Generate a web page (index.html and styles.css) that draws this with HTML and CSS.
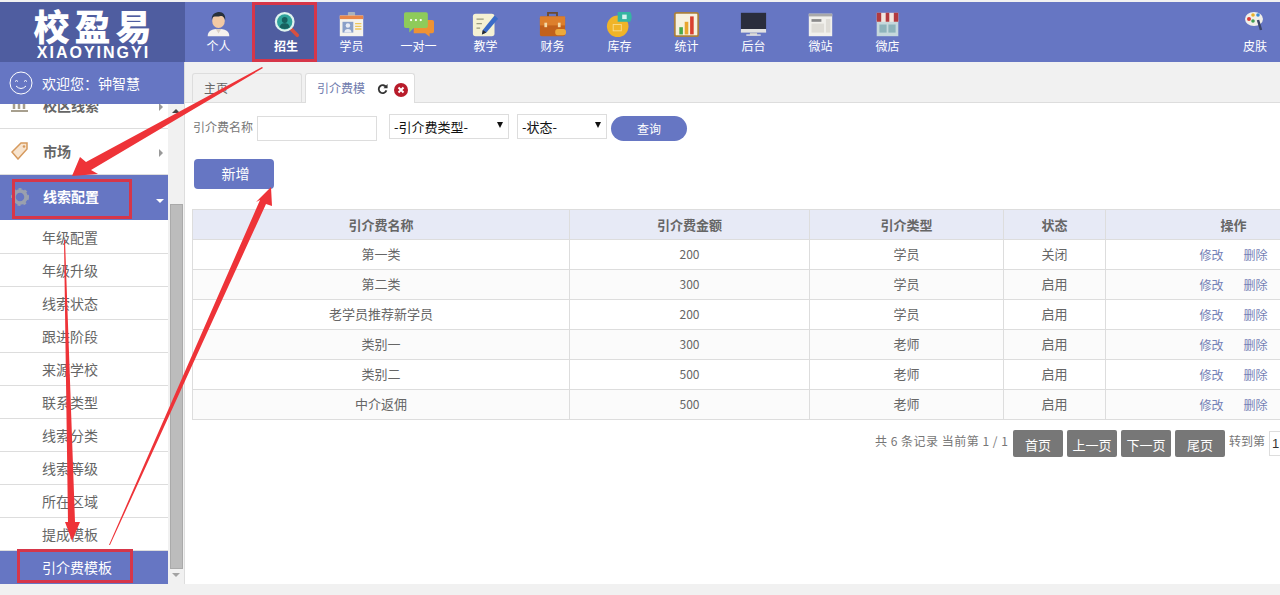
FILE: index.html
```html
<!DOCTYPE html>
<html lang="zh-CN">
<head>
<meta charset="utf-8">
<title>引介费模板</title>
<link rel="stylesheet" href="styles.css">
</head>
<body>
<div class="app">
  <header class="top">
    <div class="logo">
      <div class="logo-cn">校盈易</div>
      <div class="logo-en">XIAOYINGYI</div>
    </div>
    <nav class="nav">
      <a class="nav-item"><svg class="ico" viewBox="0 0 30 30"><path d="M3 28c0-6 5-8 12-8s12 2 12 8z" fill="#f4f1ee"/><path d="M12 20l3 5 3-5z" fill="#d9cfc6"/><ellipse cx="15" cy="11" rx="7" ry="8" fill="#f2c9a4"/><path d="M7.500 10C7 3 12 1 16 1s7 3 6.500 9c-1-3-3-5-5-4.500-3 1-7 0-8 1-1 .6-1.500 2-2 3.500z" fill="#28303a"/></svg><span>个人</span></a>
      <a class="nav-item active"><svg class="ico" viewBox="0 0 30 30"><path d="M19 19l8 8" stroke="#d8503f" stroke-width="4" stroke-linecap="round"/><circle cx="13" cy="12" r="11" fill="#dff3ef"/><circle cx="13" cy="12" r="8.500" fill="#2fa39b"/><circle cx="13" cy="10" r="3.200" fill="#17615f"/><path d="M7.500 18c.5-4 3-4.500 5.500-4.500s5 .5 5.500 4.500c-3 2.500-8 2.500-11 0z" fill="#17615f"/></svg><span>招生</span></a>
      <a class="nav-item"><svg class="ico" viewBox="0 0 30 30"><rect x="11" y="1" width="8" height="6" rx="1" fill="#aab2bd"/><rect x="2" y="5" width="26" height="23" fill="#f5f3ec"/><rect x="2" y="5" width="26" height="4" fill="#e9864a"/><rect x="5" y="12" width="12" height="12" fill="#8aa0c8"/><circle cx="11" cy="16" r="2.500" fill="#e8ecf5"/><path d="M7 24c0-3 2-4 4-4s4 1 4 4z" fill="#e8ecf5"/><path d="M19 14h7M19 17h7M19 20h7" stroke="#eec65a" stroke-width="1.500"/></svg><span>学员</span></a>
      <a class="nav-item"><svg class="ico ico-wide" viewBox="0 0 34 30"><path d="M11 10h21a2 2 0 0 1 2 2v11a2 2 0 0 1-2 2h-3v4l-5-4H11z" fill="#ee9233"/><path d="M2 1h23a2 2 0 0 1 2 2v14a2 2 0 0 1-2 2H11l-5 5v-5H2a2 2 0 0 1-2-2V3a2 2 0 0 1 2-2z" fill="#8ecb5a"/><circle cx="8" cy="10" r="1.300" fill="#fff"/><circle cx="13.500" cy="10" r="1.300" fill="#fff"/><circle cx="19" cy="10" r="1.300" fill="#fff"/></svg><span>一对一</span></a>
      <a class="nav-item"><svg class="ico" viewBox="0 0 30 30"><rect x="1" y="3" width="24" height="25" rx="3" fill="#f5f1d3"/><path d="M5 9h8M5 14h6M5 19h4" stroke="#9a9a7e" stroke-width="1.500"/><path d="M12 21L25 5l4 3.500L16 24l-5 2z" fill="#3a6bc8"/><path d="M11 26l1-5 4 3z" fill="#2b2b2b"/></svg><span>教学</span></a>
      <a class="nav-item"><svg class="ico" viewBox="0 0 30 30"><path d="M10 6V2h10v4" fill="none" stroke="#6b4a30" stroke-width="2"/><rect x="1" y="6" width="28" height="22" rx="2" fill="#c2611c"/><rect x="1" y="6" width="28" height="10" fill="#dd7f2c"/><rect x="6" y="13" width="3" height="5" fill="#f4d9a6"/><rect x="21" y="13" width="3" height="5" fill="#f4d9a6"/><rect x="18" y="20" width="12" height="7" rx="3" fill="#eda93c"/></svg><span>财务</span></a>
      <a class="nav-item"><svg class="ico" viewBox="0 0 30 30"><circle cx="13" cy="17" r="12" fill="#f0b428"/><path d="M13 12V1h14a11 11 0 0 1 0 11z" fill="#35b5a2"/><rect x="8" y="15" width="9" height="7" fill="none" stroke="#f8dc8e" stroke-width="1"/><rect x="18" y="4" width="5" height="5" fill="#d8f3ee"/></svg><span>库存</span></a>
      <a class="nav-item"><svg class="ico" viewBox="0 0 30 30"><rect x="2" y="2" width="26" height="26" rx="2" fill="#f7f1df" stroke="#a87f3f" stroke-width="2"/><rect x="7" y="18" width="4" height="8" fill="#4aa84a"/><rect x="13" y="12" width="4" height="14" fill="#e8a52e"/><rect x="19" y="6" width="4" height="20" fill="#d9402f"/></svg><span>统计</span></a>
      <a class="nav-item"><svg class="ico" viewBox="0 0 30 30"><rect x="1" y="2" width="28" height="20" fill="#2a2d3c"/><rect x="1" y="20" width="28" height="4" fill="#e3e3e3"/><rect x="11" y="24" width="8" height="3" fill="#c9c9c9"/><rect x="7" y="26" width="16" height="1.500" fill="#e8e8e8"/></svg><span>后台</span></a>
      <a class="nav-item"><svg class="ico" viewBox="0 0 30 30"><rect x="2" y="3" width="26" height="25" fill="#f1f0ec"/><rect x="2" y="3" width="26" height="3" fill="#a9a9a9"/><rect x="5" y="9" width="11" height="3" fill="#8a8a8a"/><rect x="5" y="14" width="14" height="10" fill="#dedcd6"/><rect x="21" y="9" width="5" height="15" fill="#dedcd6"/></svg><span>微站</span></a>
      <a class="nav-item"><svg class="ico" viewBox="0 0 30 30"><rect x="3" y="10" width="24" height="18" fill="#c6d8dc"/><rect x="6" y="15" width="8" height="9" fill="#8eb3bb"/><rect x="16" y="15" width="8" height="9" fill="#8eb3bb"/><path d="M3 2h24v10H3z" fill="#f1e6df"/><path d="M3 2h5v10H3zM13 2h4v10h-4zM22 2h5v10h-5z" fill="#b23a3f"/></svg><span>微店</span></a>
      <a class="nav-item skin"><svg class="ico ico-small" viewBox="0 0 20 20"><ellipse cx="9" cy="8" rx="9" ry="7" fill="#f1efe8"/><circle cx="4" cy="8" r="2" fill="#dd3b36"/><circle cx="8" cy="4" r="1.800" fill="#e8b22c"/><circle cx="13" cy="4" r="1.800" fill="#3a8bd6"/><circle cx="8" cy="10" r="1.800" fill="#3e9e52"/><path d="M13 9l3 10" stroke="#3b4568" stroke-width="2.500"/></svg><span>皮肤</span></a>
    </nav>
  </header>

  <aside class="side">
    <div class="welcome">
      <svg class="smile" viewBox="0 0 24 24"><circle cx="12" cy="12" r="11" fill="none" stroke="#fff" stroke-width="1"/><path d="M6 10.500q1.500-2 3 0M15 10.500q1.500-2 3 0M7 15q5 5 10 0" fill="none" stroke="#fff" stroke-width="1"/></svg>
      <span>欢迎您：钟智慧</span>
    </div>
    <div class="side-body">
      <ul class="menu">
        <li class="group clipped"><svg class="group-ico" viewBox="0 0 18 14"><path d="M3 1v9M8 1v9M13 1v9" stroke="#a79f8e" stroke-width="2.500"/><path d="M0 12h17" stroke="#a79f8e" stroke-width="2"/></svg><span>校区线索</span><i class="arrow-r"></i></li>
        <li class="group"><svg class="group-ico" viewBox="0 0 18 18"><path d="M1 10L10 1h6v6l-9 10z" fill="#f7e4cf" stroke="#d69a5e" stroke-width="1.500"/><circle cx="13" cy="4.500" r="1.300" fill="#d69a5e"/></svg><span>市场</span><i class="arrow-r"></i></li>
        <li class="group open marked"><svg class="group-ico" viewBox="0 0 18 18"><circle cx="9" cy="9" r="6" fill="none" stroke="#9aa0ae" stroke-width="3.500"/><circle cx="9" cy="9" r="8" fill="none" stroke="#9aa0ae" stroke-width="2" stroke-dasharray="3 3"/></svg><span>线索配置</span><i class="arrow-d"></i></li>
        <li class="sub">年级配置</li>
        <li class="sub">年级升级</li>
        <li class="sub">线索状态</li>
        <li class="sub">跟进阶段</li>
        <li class="sub">来源学校</li>
        <li class="sub">联系类型</li>
        <li class="sub">线索分类</li>
        <li class="sub">线索等级</li>
        <li class="sub">所在区域</li>
        <li class="sub">提成模板</li>
        <li class="sub current marked">引介费模板</li>
      </ul>
      <div class="scrollbar">
        <i class="sb-up"></i>
        <div class="sb-thumb"></div>
        <i class="sb-down"></i>
      </div>
    </div>
  </aside>

  <main class="main">
    <div class="tabs">
      <div class="tab">主页</div>
      <div class="tab on">
        <span class="tab-name">引介费模</span>
        <svg class="tab-ico" viewBox="0 0 12 12"><path d="M10 3.500A4.300 4.300 0 1 0 10.300 7" fill="none" stroke="#333" stroke-width="2"/><path d="M7 4.500h4.500V0z" fill="#333"/></svg>
        <svg class="tab-ico close" viewBox="0 0 14 14"><circle cx="7" cy="7" r="7" fill="#b81c2b"/><path d="M4.500 4.500l5 5M9.500 4.500l-5 5" stroke="#fff" stroke-width="2"/></svg>
      </div>
    </div>
    <div class="content">
      <form class="filters">
        <label class="f-label">引介费名称</label>
        <input class="f-input" type="text">
        <div class="f-select w120"><select><option>-引介费类型-</option></select></div>
        <div class="f-select w90"><select><option>-状态-</option></select></div>
        <button class="f-query" type="button">查询</button>
      </form>
      <button class="add" type="button">新增</button>
      <table class="grid">
        <colgroup><col class="c1"><col class="c2"><col class="c3"><col class="c4"><col class="c5"></colgroup>
        <thead><tr><th>引介费名称</th><th>引介费金额</th><th>引介类型</th><th>状态</th><th>操作</th></tr></thead>
        <tbody>
          <tr><td>第一类</td><td class="num">200</td><td>学员</td><td>关闭</td><td><a>修改</a><a>删除</a></td></tr>
          <tr><td>第二类</td><td class="num">300</td><td>学员</td><td>启用</td><td><a>修改</a><a>删除</a></td></tr>
          <tr><td>老学员推荐新学员</td><td class="num">200</td><td>学员</td><td>启用</td><td><a>修改</a><a>删除</a></td></tr>
          <tr><td>类别一</td><td class="num">300</td><td>老师</td><td>启用</td><td><a>修改</a><a>删除</a></td></tr>
          <tr><td>类别二</td><td class="num">500</td><td>老师</td><td>启用</td><td><a>修改</a><a>删除</a></td></tr>
          <tr><td>中介返佣</td><td class="num">500</td><td>老师</td><td>启用</td><td><a>修改</a><a>删除</a></td></tr>
        </tbody>
      </table>
      <div class="pager">
        <span class="p-info">共 6 条记录 当前第 1 / 1</span>
        <a class="p-btn">首页</a><a class="p-btn">上一页</a><a class="p-btn">下一页</a><a class="p-btn">尾页</a>
        <span class="p-goto">转到第</span>
        <input class="p-input" type="text" value="1">
      </div>
    </div>
  </main>
</div>

<svg class="notes" viewBox="0 0 1280 595">
  <g fill="#ee3338">
    <polygon points="72,176 80,157 86,162 262,67 263,68 91,170 98,174"/>
    <polygon points="64,240 65,240 75,522 80,522 72,541 65,522 68,522"/>
    <polygon points="109,545 110,545 266,204 272,206 271,187 256,202 260,200"/>
  </g>
</svg>
</body>
</html>
```

FILE: styles.css
```css
* { box-sizing: border-box; }
html, body { margin: 0; height: 100%; }
body {
  position: relative;
  width: 1280px;
  height: 595px;
  overflow: hidden;
  padding-top: 2px;
  background: #f1f1f1;
  font-family: "Noto Sans CJK SC", "Liberation Sans", sans-serif;
  font-size: 12px;
  color: #666;
}
ul { list-style: none; margin: 0; padding: 0; }

.app {
  display: grid;
  grid-template-columns: 185px 1095px;
  grid-template-rows: 60px 522px;
}

/* header */
.top { grid-column: 1 / 3; display: flex; background: #6676c3; color: #fff; }
.logo {
  width: 185px;
  background: #4f5da0;
  display: flex;
  flex-direction: column;
  align-items: center;
  color: #fff;
  font-weight: 700;
}
.logo-cn { font-size: 36px; line-height: 40px; letter-spacing: 5px; margin: 3px -5px 0 0; font-weight: 900; }
.logo-en { font-family: "Liberation Sans", sans-serif; font-size: 16px; line-height: 15px; letter-spacing: 2px; margin-right: -2px; }
.nav { flex: 1; display: flex; }
.nav-item {
  position: relative;
  width: 67px;
  height: 60px;
  display: flex;
  flex-direction: column;
  align-items: center;
  padding-top: 9px;
  font-size: 12px;
  line-height: 17px;
}
.nav-item span { position: absolute; top: 35px; }
.ico { width: 27px; height: 27px; display: block; }
.ico-wide { width: 30px; }
.ico-small { width: 20px; height: 20px; }
.active { background: #4f5da0; font-weight: 700; margin-left: 1px; width: 63px; margin-right: 2px; padding-left: 3px; }
.active::after {
  content: "";
  position: absolute;
  inset: 0 -1px 0 -1px;
  border: 3px solid #d63649;
}
.skin { margin-left: auto; width: 48px; padding-right: 2px; }

/* sidebar */
.side { display: flex; flex-direction: column; background: #fff; border-right: 1px solid #ddd; height: 522px; overflow: hidden; }
.welcome {
  height: 42px;
  flex: none;
  background: #6676c3;
  color: #fff;
  font-size: 14px;
  display: flex;
  align-items: center;
  gap: 9px;
  padding-left: 9px;
  position: relative;
  z-index: 1;
}
.smile { width: 24px; height: 24px; }
.side-body { flex: 1; display: flex; overflow: hidden; background: #fff; }
.menu { width: 168px; flex: none; margin-top: -21px; }
.group {
  position: relative;
  height: 46px;
  display: flex;
  align-items: center;
  padding: 0 0 2px 43px;
  font-size: 14px;
  font-weight: 700;
  color: #666;
  border-bottom: 1px solid #ddd;
}
.group-ico { position: absolute; left: 11px; top: 13px; width: 18px; height: 18px; }
.clipped .group-ico { top: 14px; }
.arrow-r {
  position: absolute;
  right: 5px;
  top: 20px;
  border-left: 4px solid #999;
  border-top: 4px solid transparent;
  border-bottom: 4px solid transparent;
}
.arrow-d {
  position: absolute;
  right: 4px;
  top: 24px;
  border-top: 4px solid #fff;
  border-left: 4px solid transparent;
  border-right: 4px solid transparent;
}
.open { background: #6676c3; color: #fff; border-bottom: 0; height: 45px; padding-bottom: 3px; }
.sub {
  position: relative;
  height: 33px;
  line-height: 33px;
  padding-left: 42px;
  font-size: 14px;
  color: #666;
  border-bottom: 1px solid #ddd;
}
.open + .sub { height: 34px; line-height: 35px; }
.current { background: #6676c3; color: #fff; border-bottom: 0; }
.marked::after {
  content: "";
  position: absolute;
  border: 3px solid #d63649;
}
.open.marked::after { left: 12px; right: 36px; top: 4px; bottom: 1px; }
.current.marked::after { left: 17px; right: 35px; top: -2px; bottom: 1px; }
.scrollbar {
  width: 16px;
  background: #f1f1f1;
  position: relative;
  display: flex;
  flex-direction: column;
  align-items: center;
}
.sb-up {
  margin-top: 5px;
  border-bottom: 4px solid #444;
  border-left: 4px solid transparent;
  border-right: 4px solid transparent;
}
.sb-thumb { width: 13px; height: 365px; margin-top: 91px; background: #bcbcbc; border: 1px solid #aaa; }
.sb-down {
  margin-top: 4px;
  border-top: 4px solid #a3a3a3;
  border-left: 4px solid transparent;
  border-right: 4px solid transparent;
}

/* main */
.main { background: #fff; overflow: hidden; display: flex; flex-direction: column; height: 522px; }
.tabs {
  height: 41px;
  flex: none;
  background: #f1f1f1;
  border-bottom: 1px solid #ddd;
  display: flex;
  align-items: flex-end;
  padding-left: 7px;
  gap: 3px;
}
.tab {
  width: 110px;
  height: 29px;
  border: 1px solid #ddd;
  border-bottom: 0;
  border-radius: 3px 3px 0 0;
  padding-left: 11px;
  line-height: 28px;
  font-size: 12px;
  color: #666;
  display: flex;
}
.tab.on {
  height: 30px;
  margin-bottom: -1px;
  background: #fff;
  color: #6f7bad;
  align-items: center;
  line-height: 26px;
}
.tab-name { position: relative; top: -1px; }
.tab-ico { width: 11px; height: 11px; margin-left: 12px; margin-top: 1px; }
.tab-ico.close { width: 14px; height: 14px; margin-left: 6px; margin-top: 3px; }
.content { padding: 12px 0 0 7px; flex: 1; width: 1300px; }
.filters { display: flex; align-items: flex-start; height: 27px; }
.f-label { line-height: 24px; width: 65px; padding-left: 1px; font-size: 12px; color: #777; }
.f-input { width: 120px; height: 25px; margin: 1px 12px 0 0; border: 1px solid #ddd; background: #fff; }
.f-select { position: relative; height: 25px; margin-right: 8px; margin-top: -1px; }
.f-select::after {
  content: "";
  position: absolute;
  right: 6px;
  top: 8px;
  border-top: 6px solid #111;
  border-left: 3.500px solid transparent;
  border-right: 3.500px solid transparent;
}
.f-select select {
  appearance: none;
  width: 100%;
  height: 25px;
  border: 1px solid #ddd;
  background: #fff;
  color: #111;
  font: 13px "Noto Sans CJK SC", "Liberation Sans", sans-serif;
  padding: 0 0 0 4px;
  border-radius: 0;
}
.w120 { width: 120px; }
.w90 { width: 90px; margin-right: 4px; }
.f-query {
  width: 76px;
  height: 25px;
  margin-top: 1px;
  border: 0;
  border-radius: 13px;
  background: #6676c3;
  color: #fff;
  font: 12px "Noto Sans CJK SC", "Liberation Sans", sans-serif;
}
.add {
  display: block;
  width: 80px;
  height: 30px;
  margin: 17px 0 20px 2px;
  padding: 0 0 2px 3px;
  border: 0;
  border-radius: 4px;
  background: #6676c3;
  color: #fff;
  font: 14px "Noto Sans CJK SC", "Liberation Sans", sans-serif;
}
.grid { border-collapse: collapse; table-layout: fixed; width: 1169px; font-size: 13px; }
.c1 { width: 377px; }
.c2 { width: 240px; }
.c3 { width: 194px; }
.c4 { width: 102px; }
.c5 { width: 256px; }
.grid th, .grid td {
  height: 30px;
  padding: 0;
  border: 1px solid #ddd;
  text-align: center;
  color: #666;
}
.grid td { padding-bottom: 3px; }
.grid th { background: #e7eaf6; font-size: 13px; font-weight: 700; color: #666; }
.grid tbody tr:nth-child(even) td { background: #fbfbfb; }
.grid td.num { font-size: 12px; }
.grid td a { color: #7480b5; margin: 0 10px; font-size: 12px; vertical-align: -1px; }
.pager {
  display: flex;
  align-items: flex-start;
  margin: 10px 0 0 683px;
  white-space: nowrap;
}
.p-info { line-height: 22px; width: 138px; color: #777; letter-spacing: .5px; }
.p-btn {
  width: 50px;
  height: 27px;
  line-height: 29px;
  margin-right: 4px;
  text-align: center;
  border-radius: 2px;
  background: #777;
  color: #fff;
  font-size: 13px;
}
.p-goto { line-height: 22px; width: 40px; color: #777; }
.p-input { width: 30px; height: 25px; margin-top: 1px; border: 1px solid #ddd; padding: 0 0 0 2px; font: 13px "Liberation Sans", sans-serif; color: #333; }

/* hand-drawn annotation arrows over the page */
.notes { position: absolute; left: 0; top: 0; width: 1280px; height: 595px; pointer-events: none; }
```
